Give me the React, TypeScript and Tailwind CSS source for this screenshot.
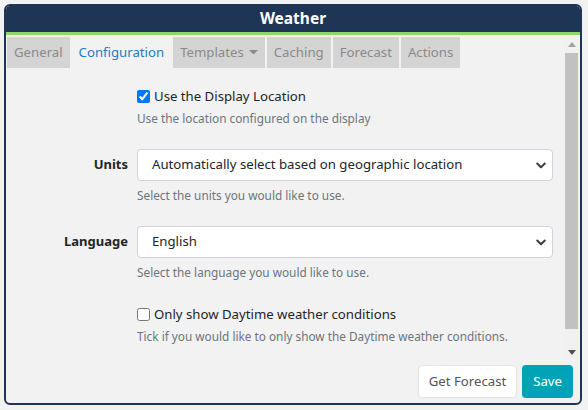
import React from "react";

const font = { fontFamily: '"Segoe UI", "Noto Sans", sans-serif' };

function Chevron() {
  return (
    <svg width="10" height="7" viewBox="0 0 10 7" className="shrink-0">
      <path d="M1.2 1.5 L5 5.2 L8.8 1.5" fill="none" stroke="#343a40" strokeWidth="1.9" strokeLinecap="round" strokeLinejoin="round" />
    </svg>
  );
}

function Select({ value }: { value: string }) {
  return (
    <div className="flex h-[32px] items-center justify-between rounded-[4px] border border-[#ced4da] bg-white pl-[14px] pr-[6px] text-[13.2px] text-[#212529]">
      <span>{value}</span>
      <Chevron />
    </div>
  );
}

const tabs = ["General", "Configuration", "Templates", "Caching", "Forecast", "Actions"];

export default function App() {
  return (
    <div className="h-[410px] w-[588px] bg-[#f2f2f2] pl-[4px] pt-[4px]" style={font}>
      <div className="flex h-[401px] w-[578px] flex-col overflow-hidden rounded-[6px] border-2 border-[#1f3556] bg-[#f2f2f2]">
        <div className="flex h-[26px] shrink-0 items-center justify-center bg-[#1f3556] text-[15.5px] font-bold text-white">
          Weather
        </div>
        <div className="h-[3px] shrink-0 bg-[#8cd96b]" />
        <div className="flex h-[324px] shrink-0 pl-[1px] pr-[2px] pt-[2px]">
          <div className="flex-1 overflow-hidden">
            <div className="flex gap-[2px]">
              {tabs.map((t) => (
                <div
                  key={t}
                  className={
                    "flex h-[31px] items-center px-[7px] text-[13.2px] " +
                    (t === "Configuration" ? "text-[#1b7dc3]" : "bg-[#d4d4d4] text-[#8a8a8a]")
                  }
                >
                  {t}
                  {t === "Templates" && (
                    <svg width="9" height="5" viewBox="0 0 9 5" className="ml-[5px]">
                      <path d="M0 0 L9 0 L4.5 4.5 Z" fill="#8a8a8a" />
                    </svg>
                  )}
                </div>
              ))}
            </div>
            <div className="grid grid-cols-[121px_1fr] gap-x-[9px] pr-[12px] pt-[18px]">
              <div />
              <div>
                <label className="flex h-[21px] items-center gap-[4px] text-[13.2px] text-[#212529]">
                  <input type="checkbox" defaultChecked className="m-0 h-[13px] w-[13px] accent-[#0075ff]" />
                  <span>Use the Display Location</span>
                </label>
                <div className="mt-[2px] text-[11.8px] leading-[18px] text-[#6c757d]">Use the location configured on the display</div>
              </div>

              <div className="mt-[22px] flex h-[32px] items-center justify-end text-[13px] font-bold text-[#212529]">Units</div>
              <div className="mt-[22px]">
                <Select value="Automatically select based on geographic location" />
                <div className="mt-[5px] text-[11.8px] leading-[18px] text-[#6c757d]">Select the units you would like to use.</div>
              </div>

              <div className="mt-[22px] flex h-[32px] items-center justify-end text-[13px] font-bold text-[#212529]">Language</div>
              <div className="mt-[22px]">
                <Select value="English" />
                <div className="mt-[5px] text-[11.8px] leading-[18px] text-[#6c757d]">Select the language you would like to use.</div>
              </div>

              <div />
              <div className="mt-[23px]">
                <label className="flex h-[21px] items-center gap-[4px] text-[13.2px] text-[#212529]">
                  <input type="checkbox" className="m-0 h-[13px] w-[13px]" />
                  <span>Only show Daytime weather conditions</span>
                </label>
                <div className="mt-[2px] text-[11.8px] leading-[18px] text-[#6c757d]">Tick if you would like to only show the Daytime weather conditions.</div>
              </div>
            </div>
          </div>
          <div className="flex w-[13px] shrink-0 flex-col bg-[#f1f1f1]">
            <div className="flex h-[14px] items-center justify-center">
              <svg width="8" height="5" viewBox="0 0 8 5"><path d="M0 5 L4 0 L8 5 Z" fill="#a3a3a3" /></svg>
            </div>
            <div className="mt-[2px] mb-[16px] flex-1 bg-[#c1c1c1]" />
            <div className="flex h-[14px] items-center justify-center">
              <svg width="8" height="5" viewBox="0 0 8 5"><path d="M0 0 L8 0 L4 5 Z" fill="#505050" /></svg>
            </div>
          </div>
        </div>
        <div className="flex flex-1 items-start justify-end gap-[5px] pr-[7px] pt-[6px]">
          <button className="h-[33px] rounded-[4px] border border-[#e3e3e3] bg-white px-[10px] text-[13.2px] text-[#555]">Get Forecast</button>
          <button className="h-[33px] rounded-[4px] bg-[#00a3b6] px-[11px] text-[13.2px] text-white">Save</button>
        </div>
      </div>
    </div>
  );
}
